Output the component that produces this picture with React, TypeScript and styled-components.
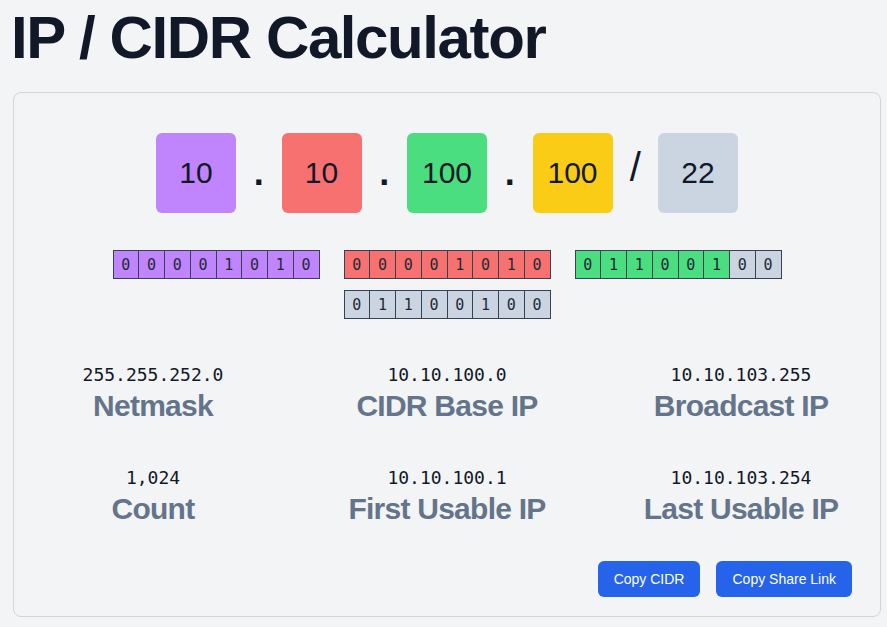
import React from "react";
import styled, { createGlobalStyle } from "styled-components";

const GlobalStyle = createGlobalStyle`
  html, body {
    margin: 0;
    background: #f3f4f6;
  }
  body {
    font-family: "Liberation Sans", Arial, sans-serif;
    color: #111827;
  }
`;

const Page = styled.div`
  padding: 8px 6px 8px 8px;
`;

const Title = styled.h1`
  margin: 0 0 0 3px;
  font-size: 60px;
  line-height: 60px;
  font-weight: 700;
  letter-spacing: -1.4px;
  color: #111827;
`;

const Card = styled.div`
  margin: 24px 0 0 5px;
  border: 1px solid #d1d5db;
  border-radius: 8px;
  background: #f3f4f6;
  padding: 40px 0 19px;
  display: flex;
  flex-direction: column;
`;

const OctetRow = styled.div`
  display: flex;
  justify-content: center;
  align-items: center;
`;

const Octet = styled.div<{ $bg: string }>`
  width: 80px;
  height: 80px;
  border-radius: 6px;
  background: ${(p) => p.$bg};
  display: flex;
  align-items: center;
  justify-content: center;
  font-size: 30px;
  color: #111827;
`;

const Sep = styled.div<{ $slash?: boolean }>`
  width: 45.5px;
  text-align: center;
  font-size: ${(p) => (p.$slash ? "40px" : "36px")};
  line-height: 1;
  font-weight: ${(p) => (p.$slash ? 400 : 700)};
  transform: translateY(${(p) => (p.$slash ? "-6px" : "0")});
`;

const BitsWrap = styled.div`
  margin: 37px auto 0;
  width: 680px;
  display: flex;
  flex-wrap: wrap;
  justify-content: center;
  column-gap: 24px;
  row-gap: 11px;
`;

const BitGroup = styled.div`
  display: flex;
  border: 1px solid #374151;
`;

const Bit = styled.div<{ $bg: string }>`
  width: 24.75px;
  height: 27px;
  background: ${(p) => p.$bg};
  border-right: 1px solid #374151;
  display: flex;
  align-items: center;
  justify-content: center;
  font-family: "DejaVu Sans Mono", monospace;
  font-size: 15px;
  color: #1f2937;
  &:last-child {
    border-right: none;
  }
`;

const StatsGrid = styled.div`
  margin-top: 43px;
  display: grid;
  grid-template-columns: repeat(3, 277px);
  column-gap: 17px;
  row-gap: 41px;
  justify-content: center;
`;

const Stat = styled.div`
  display: flex;
  flex-direction: column;
  align-items: center;
`;

const StatValue = styled.div`
  font-family: "DejaVu Sans Mono", monospace;
  font-size: 18px;
  line-height: 26px;
  color: #111827;
`;

const StatLabel = styled.div`
  font-size: 30px;
  line-height: 36px;
  font-weight: 700;
  letter-spacing: -0.75px;
  color: #64748b;
`;

const Actions = styled.div`
  margin-top: 34px;
  padding-right: 28px;
  display: flex;
  justify-content: flex-end;
  gap: 16px;
`;

const Button = styled.button`
  height: 36px;
  padding: 0 16px;
  border: none;
  border-radius: 6px;
  background: #2563eb;
  color: #ffffff;
  font-family: "Liberation Sans", Arial, sans-serif;
  font-size: 14px;
  cursor: pointer;
`;

const octets = [10, 10, 100, 100];
const prefix = 22;
const colors = ["#c084fc", "#f87171", "#4ade80", "#facc15"];
const hostColor = "#cbd5e1";

const stats = [
  { value: "255.255.252.0", label: "Netmask" },
  { value: "10.10.100.0", label: "CIDR Base IP" },
  { value: "10.10.103.255", label: "Broadcast IP" },
  { value: "1,024", label: "Count" },
  { value: "10.10.100.1", label: "First Usable IP" },
  { value: "10.10.103.254", label: "Last Usable IP" },
];

export default function App() {
  return (
    <Page>
      <GlobalStyle />
      <Title>IP / CIDR Calculator</Title>
      <Card>
        <OctetRow>
          {octets.map((o, i) => (
            <React.Fragment key={i}>
              <Octet $bg={colors[i]}>{o}</Octet>
              {i < 3 ? <Sep>.</Sep> : <Sep $slash>/</Sep>}
            </React.Fragment>
          ))}
          <Octet $bg={hostColor}>{prefix}</Octet>
        </OctetRow>
        <BitsWrap>
          {octets.map((o, i) => (
            <BitGroup key={i}>
              {o
                .toString(2)
                .padStart(8, "0")
                .split("")
                .map((b, j) => (
                  <Bit key={j} $bg={i * 8 + j < prefix ? colors[i] : hostColor}>
                    {b}
                  </Bit>
                ))}
            </BitGroup>
          ))}
        </BitsWrap>
        <StatsGrid>
          {stats.map((s) => (
            <Stat key={s.label}>
              <StatValue>{s.value}</StatValue>
              <StatLabel>{s.label}</StatLabel>
            </Stat>
          ))}
        </StatsGrid>
        <Actions>
          <Button>Copy CIDR</Button>
          <Button>Copy Share Link</Button>
        </Actions>
      </Card>
    </Page>
  );
}
